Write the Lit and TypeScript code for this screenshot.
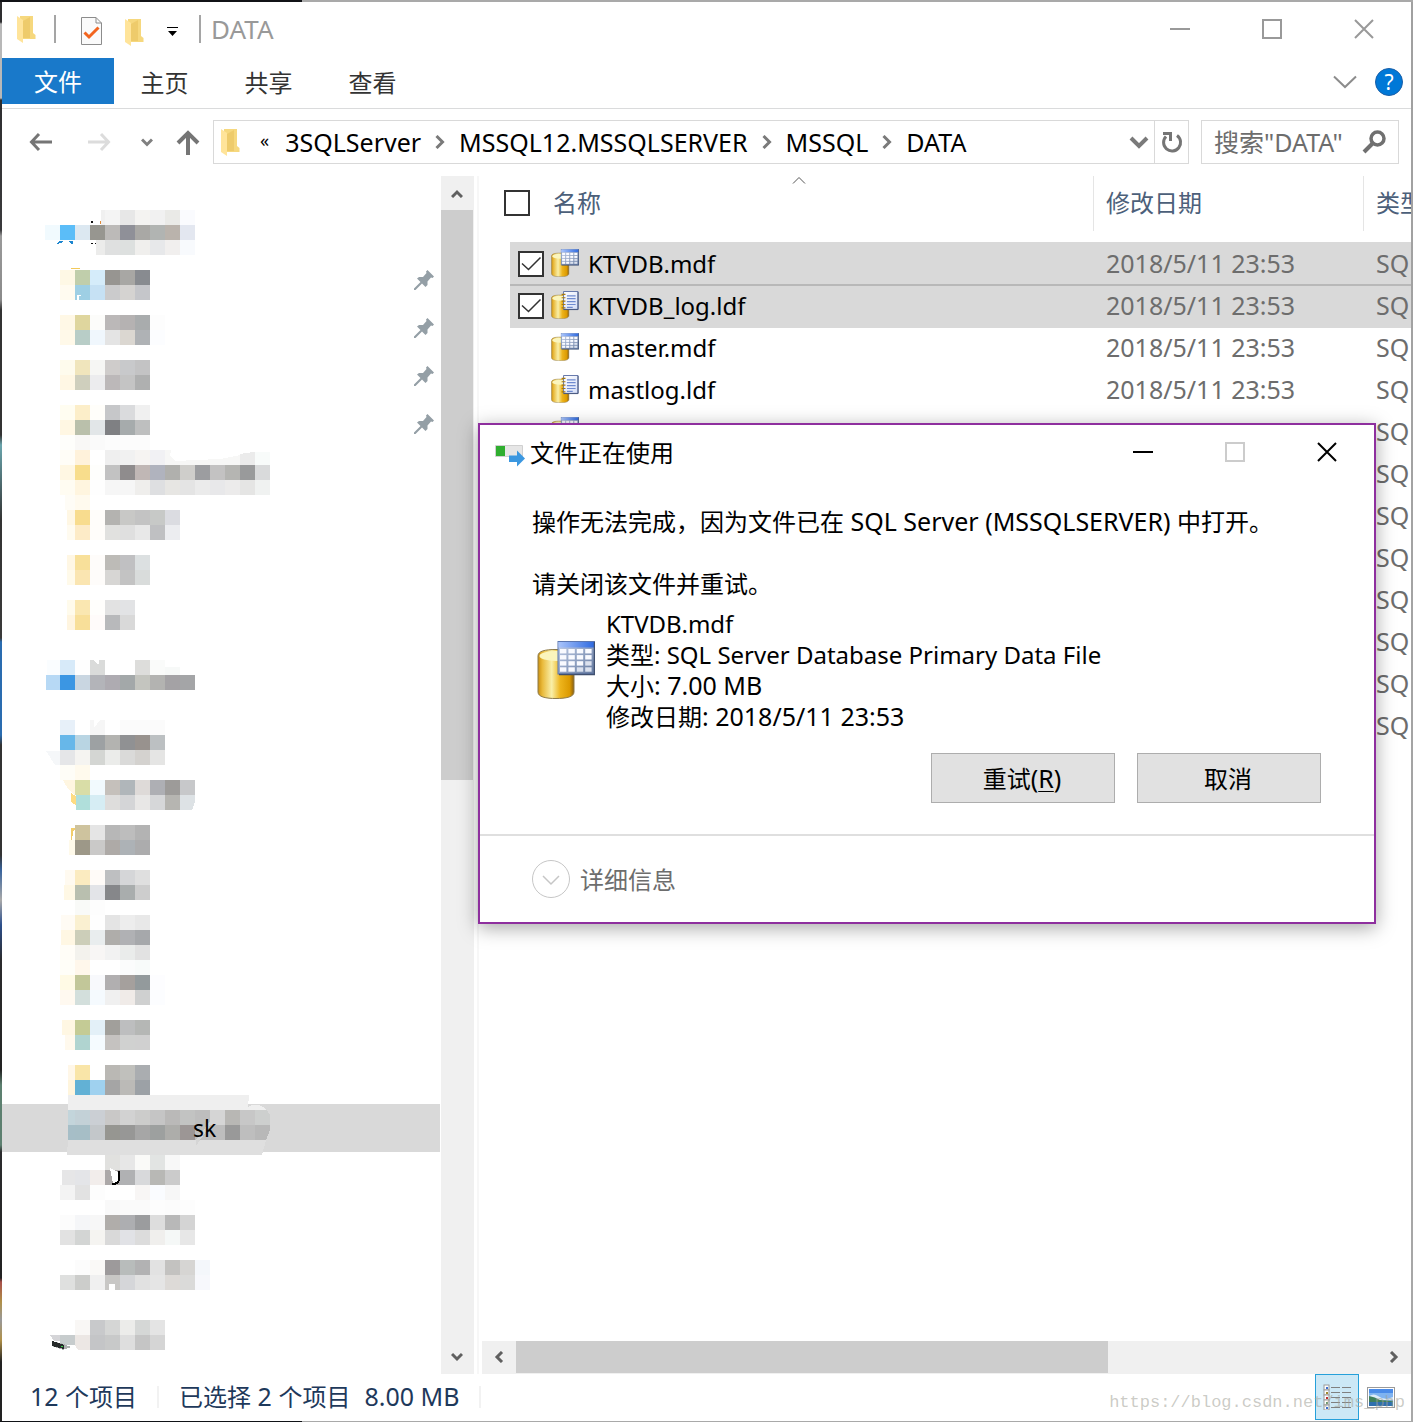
import { LitElement, html, svg, css, nothing } from "lit";
import { customElement, property, state } from "lit/decorators.js";

/* ---------- shared text helper: CJK and Latin runs use different sizes ---------- */
const mixed = (text: string) =>
  text
    .split(/([\u0020-\u007e]+)/)
    .filter((part) => part !== "")
    .map((part) => (/^[\u0020-\u007e]+$/.test(part) ? html`<span class="en">${part}</span>` : part));

const base = css`
  *,
  *::before,
  *::after {
    box-sizing: border-box;
  }
  .en {
    font-size: 25px;
  }
  button,
  input {
    font: inherit;
    color: inherit;
    background: none;
    border: 0;
    padding: 0;
    margin: 0;
    border-radius: 0;
  }
  svg {
    display: block;
    flex: none;
  }
`;

/* ---------- icons ---------- */
const folder = html`<svg width="19" height="27" viewBox="0 0 19 27">
  <path d="M3 0H16V17L18.500 19V23H3Z" fill="#f6d87e" />
  <path d="M6 5L13 1V22H6Z" fill="#ecc866" opacity=".8" />
  <path d="M0 0L6 4V27L0 23Z" fill="#ffe49a" />
</svg>`;

const minimize = html`<svg width="20" height="20" viewBox="0 0 20 20"><path d="M0 10H20" stroke="currentColor" stroke-width="2" /></svg>`;
const maximize = html`<svg width="20" height="20" viewBox="0 0 20 20"><path d="M1 1H19V19H1Z" fill="none" stroke="currentColor" stroke-width="2" /></svg>`;
const close = html`<svg width="20" height="20" viewBox="0 0 20 20"><path d="M1 1L19 19M19 1L1 19" stroke="currentColor" stroke-width="2" /></svg>`;

const crumbArrow = html`<svg width="10" height="14" viewBox="0 0 10 14"><path d="M1.500 1L7.500 7L1.500 13" fill="none" stroke="#7a7a7a" stroke-width="3" /></svg>`;

const pin = html`<svg width="20" height="20" viewBox="0 0 20 20">
  <path d="M13.500 0L20 6.500L18.500 8L17 7.500L13.500 11.500L13.500 15L11.500 17L8 13.500L1.500 20L0 20L0 18.500L6.500 12L3 8.500L5 7L9 7L12.500 3L12 1.500Z" fill="#949fa6" />
</svg>`;

const cylinder = svg`
  <defs>
    <linearGradient id="gold" x1="0" x2="1" y1="0" y2="0">
      <stop offset="0" stop-color="#c98f10" />
      <stop offset=".12" stop-color="#e9b93a" />
      <stop offset=".38" stop-color="#f9efa8" />
      <stop offset=".62" stop-color="#edb41c" />
      <stop offset=".88" stop-color="#dc9a00" />
      <stop offset="1" stop-color="#8a5f10" />
    </linearGradient>
    <linearGradient id="head" x1="0" x2="1" y1="0" y2="0">
      <stop offset="0" stop-color="#a9c4fb" />
      <stop offset="1" stop-color="#2f6ae0" />
    </linearGradient>
    <linearGradient id="grid" x1="0" x2="1" y1="0" y2="1">
      <stop offset="0" stop-color="#c3d0ea" />
      <stop offset="1" stop-color="#64799f" />
    </linearGradient>
    <linearGradient id="page" x1="0" x2="1" y1="0" y2="1">
      <stop offset="0" stop-color="#ffffff" />
      <stop offset="1" stop-color="#d5def7" />
    </linearGradient>
  </defs>
  <path d="M1 15C1 10 8 8.500 19 8.500S37 10 37 15V51C37 56 29 57.500 19 57.500S1 56 1 51Z" fill="url(#gold)" stroke="#8d7a4a" stroke-width="1" />
  <ellipse cx="19" cy="15" rx="16.500" ry="5" fill="#fbf5bd" />`;

const cellsOf = [0, 1, 2, 3];
const dataFileArt = svg`${cylinder}
  <rect x="21" y=".500" width="36.500" height="32.500" fill="url(#grid)" stroke="#5b76b0" />
  <rect x="21.500" y="1" width="35.500" height="5.500" fill="url(#head)" />
  ${cellsOf.map((r) => cellsOf.map((c) => svg`<rect x=${23 + c * 8.4} y=${8 + r * 6.1} width="6.400" height="4.400" fill=${c + r > 4 ? "#dbe1ee" : "#f9faff"} />`))}
  <path d="M57.500 1V33.500H22" fill="none" stroke="#40506f" stroke-width="1.500" />`;
const logFileArt = svg`${cylinder}
  <path d="M26 1H56V38H26Z" fill="url(#page)" stroke="#5f73a8" stroke-width="2" />
  <path d="M56 2V38.500H26" fill="none" stroke="#46567c" stroke-width="2" />
  <path d="M33 10H51M33 16H51M33 22H51M33 28H51M33 34H45" stroke="#6f8bd0" stroke-width="2.500" />
  <path d="M22 7H30M22 14H30M22 21H30M22 28H30M22 35H30" stroke="#a87a10" stroke-width="2.500" />`;

const fileIcon = (kind: string, size: number) => html`<svg width=${size} height=${size} viewBox="0 0 58 58">
  ${kind === "ldf" ? logFileArt : dataFileArt}
</svg>`;

/* ---------- folder tree ---------- */
/* A strip is [y, x of first cell, colours]; cells end on a 15px grid. */
type Strip = [number, number, string];
interface TreeRow {
  top: number;
  pinned?: boolean;
  selected?: boolean;
  strips: Strip[];
  extra?: unknown;
}

const TREE: TreeRow[][] = [
  [
    {
      top: 208,
      strips: [
        [210, 101, "f0f0f0 f4f4f4 e7e7e7 f4f3f1 f1f1f1 eaeae7 fafbfe"],
        [225, 45, "f1fafe 5bbdf8 dce8f1 979690 bcbab8 8f9098 a9a8a5 b1b4b2 bab3ac e3e7f0"],
        [240, 96, "ececeb dfe0e0 dde0df f0efed e7e8ea f1efee f8fafd"],
      ],
      extra: svg`<path d="M57 244L59 241H63L61 243ZM69 241H73V244H71Z" fill="#1d86cf" /><path d="M91 221H93V223H91ZM91 243H93V244H91ZM95 243H96V244H95Z" fill="#111" /><path d="M100 221H101V224H100Z" fill="#e08b3a" />`,
    },
    {
      top: 256,
      pinned: true,
      strips: [
        [270, 60, "fef8e5 c0ceab d5ecfa 979591 a8a7a4 888b90"],
        [285, 60, "fffbf0 9ecfe4 c6e1f4 cbcbcc d5d3d1 c5c6ca"],
      ],
      extra: svg`<path d="M71 268H80V269H71Z" fill="#f2c95a" /><path d="M77 295H81V296H79V300H77Z" fill="#fff" />`,
    },
    {
      top: 304,
      pinned: true,
      strips: [
        [315, 60, "fff8e6 dfd69e fcfcfa bbb8b8 b5b2b2 a9acad fdfdfd"],
        [330, 60, "fff9e9 b8cdc7 f0f7fd e4e4e4 dbd7d1 afb2b5 fcfdff"],
      ],
    },
    {
      top: 352,
      pinned: true,
      strips: [
        [360, 60, "fefbed f0e5bc f6f6f4 cfcccb c8c9cb c3c3c4"],
        [375, 60, "fff7e4 cfcfbd ececee bcb8b9 c4c4c4 afb0b0"],
      ],
    },
    {
      top: 400,
      pinned: true,
      strips: [
        [405, 60, "fffdf1 fceec9 fffefa c6c7c9 dadbdd f0f0f0"],
        [420, 60, "fff7e3 bac0ab e2e6e8 7f8083 a6abac bebfbf"],
        [435, 60, "fefefb f9f8f6 fafafa fcfcfc fcfcfc fcfcfc"],
      ],
    },
    {
      top: 448,
      strips: [
        [450, 60, "fffdf7 fff2db ffffff efefef f1f1f1 f6f4f2 f1f1f4"],
        [465, 60, "fff7e3 f8dd8c fefefc c2c2c2 8f8c8d c0b7b5 b0b3be b0b0ad cfcecb 9c9da0 c3c2c2 b5b5b2 999a9b d9dadb"],
        [480, 60, "fffcf2 fff5df fefefe f6f6f6 f6f6f6 efeeec dedfe1 e7e6e3 e4e4e4 ebebeb e8e8ea ecebeb e5e5e4 f0f2f1"],
        [495, 65, "fefcf6 fffaee"],
      ],
      extra: svg`<path d="M165 450H171L170 456L176 461L195 460L220 459L240 455V465H165Z" fill="#f7f7f6" /><path d="M240 454L253 452H255V465H240Z" fill="#ebebeb" /><path d="M255 452H270V465H255Z" fill="#f8fbfa" />`,
    },
    {
      top: 496,
      strips: [
        [510, 67, "fff7e4 f8dc8e fffdfa b4b3b0 c8c8c6 c3c3c3 c7c9c7 dbdce1"],
        [525, 67, "fffbf0 fdebc7 fffdfa e1e1df dfdfdf e8e8e8 bfc0c2 ecedf0"],
      ],
    },
    {
      top: 544,
      strips: [
        [555, 67, "fff7e4 f8e09a fefcfa bdbbb7 c0c0c2 dce0e1"],
        [570, 67, "fffaea fae5b1 fefcfa d7d6d4 c3c3c3 d9dcdb"],
      ],
    },
    {
      top: 592,
      strips: [
        [600, 67, "fffbec fae7b1 fffefc e2e2e2 e2e3e5"],
        [615, 67, "fff5e0 f8df99 fffbfa b8b9bb d9d9d9"],
      ],
    },
  ],
  [
    {
      top: 656,
      strips: [
        [660, 47, "fafdff d7eaf9 fefefe dadbda ffffff ffffff dddddb fafbfa"],
        [675, 46, "b7d9f5 3b96e3 c9d6e1 b3b4b9 aeabb1 a3a8a9 c4c5bf b3b3b1 a4a2a5 a4a5a7"],
      ],
      extra: svg`<path d="M94 660H99V664L97 664Z" fill="#fff" /><path d="M165 667H180V675H165Z" fill="#f7f9f8" />`,
    },
  ],
  [
    {
      top: 720,
      strips: [
        [720, 60, "e7f0f9 ffffff f6f6f6 ffffff fbfbfb fbfbfb fbfbfb"],
        [735, 60, "67b7e9 b9d5e3 9da1a3 b3b3b0 909193 98928e bcc0c2"],
        [750, 60, "e5e6e8 f5f4f1 d4d6d3 ebecea dadad9 d4d2cf e5e5e4"],
        [765, 60, "fefdf7 fffaed"],
      ],
      extra: svg`<path d="M46 751H60V765H55Z" fill="#f5f7f9" /><path d="M94 720H100L94 728Z" fill="#fff" />`,
    },
    {
      top: 768,
      strips: [
        [780, 75, "d9dda7 f2fafe c5c0bb b0b6ba dedad8 aeafb4 9d9b99 c7c8ca"],
        [795, 76, "b0dfdb d6edf4 dedddc d4d5d7 e8e7e6 d6d7d9 b6b5b1"],
      ],
      extra: svg`<path d="M63 780H75V795L68 789Z" fill="#fff6e1" /><path d="M71 793L76 796V805L71 802Z" fill="#fddc83" /><path d="M180 795H195V802L192 810H180Z" fill="#dde2e5" />`,
    },
    {
      top: 816,
      strips: [
        [825, 75, "cec39e e5e5e5 b7b7b7 bdbdbd b3b3b3"],
        [840, 69, "fffaea 9d9888 cac9c8 aeaaa7 adb2b6 acacad"],
      ],
      extra: svg`<path d="M71 828H75V829L73 832L72 840H71Z" fill="#f2cd6c" />`,
    },
    {
      top: 864,
      strips: [
        [870, 65, "fffaf0 fbebc0 fffbf8 bebfc1 d5d6d8 dfdfdf"],
        [885, 64, "fff8e5 b9bfaf e3e4e8 86878a a9adad cdcdcd"],
        [900, 75, "f9faf8 fdfdfd"],
      ],
    },
    {
      top: 912,
      strips: [
        [915, 61, "fffbf4 faf0d1 fefefe e4e4e4 ededed e8e8e8"],
        [930, 61, "fff7e3 ccceb9 e9edee afadaa b0b1b4 a6a8ab"],
        [945, 60, "fffdf7 f3f2ed f8f6f5 f2f2f2 eaeceb e2e2e2"],
        [960, 60, "fffef8 fff7eb ffffff ffffff fbfcfc f8fbfa"],
      ],
    },
    {
      top: 960,
      strips: [
        [975, 60, "fffae5 c2c799 f8f9fc b1afb0 a5a09d 939a9c fdfdff"],
        [990, 60, "fff9f0 d3dfdc f5fafe f0f0f0 f0ebe8 cfd0d0 fcfdff"],
      ],
    },
    {
      top: 1008,
      strips: [
        [1020, 62, "fff7e3 c4cb95 e3f0f8 a19f9b bdbebf b5b7b5"],
        [1035, 65, "fff9ed b0d4d0 f5fbff c5c2c0 d0d1d0 d0d0d0"],
      ],
    },
    {
      top: 1056,
      strips: [
        [1065, 68, "fff7e8 f9e5a8 ffffff bab8b4 c0c0bc aaadb0"],
        [1080, 68, "fff5dd 62b1d5 9fd1ef a5a5a5 bbbab7 9ca1a6"],
      ],
    },
    {
      top: 1104,
      selected: true,
      strips: [
        [1110, 68, "c3d5db c3d1d7 cbcfd4 c9c8c7 d2d2d2 cccccb c5c5c5 bab9b8 c2c3c2 bebebe d5d5d5 b8b7b4 c7c7c7"],
        [1125, 68, "a6bec7 a6bec6 c3c7ca 969691 979796 a6a6a6 9da09f adadaa 9c9695 bebebe bdbdbd 999999 bebebe"],
      ],
      extra: svg`<path d="M68 1095H249L248 1107Q258 1101 267 1110H68Z" fill="#efefef" /><path d="M255 1110H267L270 1115V1125H255Z" fill="#cdcfce" /><path d="M255 1125H270V1130L266 1140H255Z" fill="#b8b8b8" /><path d="M68 1140H266L262 1155H67Z" fill="#dfdfdf" /><path d="M196 1140L196 1146L214 1120V1116Z" fill="#d5d5d5" /><text x="193" y="1137" class="frag">sk</text>`,
    },
    {
      top: 1152,
      strips: [
        [1155, 105, "e1e1df e7e7e7 fafaf8 e2e4e3 f8f8f8"],
        [1170, 62, "e6e6e7 e4e5e8 f2edeb aca8a8 b0b1b3 d8d9db b8b8b5 cbcbcb"],
        [1185, 60, "f3f3f3 e2e2e2 fdfdfd ffffff ffffff f8f6f5 fafcff f7f7f7"],
      ],
      extra: svg`<path d="M110 1168L118 1172V1182L113 1184Z" fill="#fff" /><path d="M119 1171V1180Q118 1184 112 1184" fill="none" stroke="#000" stroke-width="2" />`,
    },
    {
      top: 1200,
      strips: [
        [1200, 105, "f9f9f9 fafafa fafafa fdfdfd fcfcfc fdfdfd"],
        [1215, 60, "fcfcfc f5f6f8 f7f7f7 b0adaa adaeb1 9b9c9e dddddd b8b8b8 d4d4d4"],
        [1230, 60, "e2e2e2 d3d5d4 f5f4f1 d9d9d9 e1e2e6 dcdcdc f0efed f5f8f7 e7e7e7"],
      ],
    },
    {
      top: 1248,
      strips: [
        [1260, 60, "ffffff fcfcfc faf9f7 9d9a9b b8bcbb b2b2b3 e2e2e2 c3c2c0 d6d5d3 f4f7fb"],
        [1275, 60, "dfe0df cccdcb f0f0f0 c8c7c5 d5d6d9 e1e1e1 e5e5e5 dddad7 dadad9 f7f8fc"],
      ],
      extra: svg`<path d="M109 1284H115V1290H109Z" fill="#fff" />`,
    },
  ],
  [
    {
      top: 1312,
      strips: [
        [1320, 75, "f9f7f5 c8c9cb d5d6d5 ececea d5d7d6 e4e4e4"],
        [1335, 60, "c7cccd ece7e4 c4c5c7 c8c9c9 dedede c5c5c5 d5d5d5"],
      ],
      extra: svg`<path d="M50 1335H60V1341H54Z" fill="#d5d5d8" /><path d="M60 1345H78V1350H60Z" fill="#fff" /><path d="M75 1345H90V1350H78Z" fill="#ece7e4" /><path d="M52 1341L64 1344L71 1347L63 1350L52 1346Z" fill="#aeb0b0" /><path d="M52 1341L64 1345V1349L52 1346Z" fill="#262a2a" /><path d="M61 1346H63V1347H61Z" fill="#3ad04a" />`,
    },
  ],
];

@customElement("folder-tree")
class FolderTree extends LitElement {
  static styles = [
    base,
    css`
      :host {
        display: block;
        padding-top: 32px;
      }
      .group {
        list-style: none;
        margin: 0 0 16px;
        padding: 0;
      }
      .group:last-child {
        margin-bottom: 0;
      }
      .row {
        display: flex;
        align-items: center;
        justify-content: space-between;
        width: 100%;
        height: 48px;
        padding-right: 6px;
      }
      .row.selected {
        background: #d9d9d9;
      }
      .mosaic {
        overflow: visible;
      }
      .frag {
        font: 23px "Noto Sans", sans-serif;
        fill: #000;
      }
    `,
  ];

  private cells([y, start, colours]: Strip) {
    let x = start;
    return colours.split(" ").map((c) => {
      const next = (Math.floor(x / 15) + 1) * 15;
      const cell = svg`<rect x=${x} y=${y} width=${next - x} height="15" fill=${"#" + c} />`;
      x = next;
      return cell;
    });
  }

  render() {
    return TREE.map(
      (group) => html`<ul class="group">
        ${group.map(
          (row) => html`<li>
            <button class="row ${row.selected ? "selected" : ""}">
              <svg class="mosaic" width="300" height="48" viewBox="2 ${row.top} 300 48" shape-rendering="crispEdges">
                ${row.strips.map((s) => this.cells(s))} ${row.extra ?? nothing}
              </svg>
              ${row.pinned ? pin : nothing}
            </button>
          </li>`
        )}
      </ul>`
    );
  }
}

/* ---------- scrollbar ---------- */
@customElement("scroll-bar")
class ScrollBar extends LitElement {
  @property({ reflect: true }) direction = "vertical";
  @property({ type: Number }) size = 50;

  static styles = [
    base,
    css`
      :host {
        display: flex;
        background: #f0f0f0;
      }
      :host([direction="vertical"]) {
        flex-direction: column;
        width: 33px;
        padding-right: 1px;
      }
      :host([direction="horizontal"]) {
        height: 33px;
        padding-bottom: 1px;
      }
      .step {
        display: flex;
        align-items: center;
        justify-content: center;
        flex: none;
        width: 34px;
        height: 34px;
      }
      :host([direction="vertical"]) .step {
        width: 32px;
      }
      :host([direction="horizontal"]) .step {
        height: 32px;
      }
      .track {
        display: flex;
        flex: 1;
      }
      :host([direction="vertical"]) .track {
        flex-direction: column;
      }
      .thumb {
        background: #cdcdcd;
      }
      .arrow {
        fill: none;
        stroke: #606060;
        stroke-width: 3;
      }
    `,
  ];

  render() {
    const v = this.direction === "vertical";
    return html`
      <button class="step" aria-label="-">
        ${v
          ? html`<svg width="12" height="10" viewBox="0 0 12 10"><path class="arrow" d="M1 9L6 4L11 9" /></svg>`
          : html`<svg width="10" height="12" viewBox="0 0 10 12"><path class="arrow" d="M8 1L3 6L8 11" /></svg>`}
      </button>
      <div class="track"><div class="thumb" style="flex:0 0 ${this.size}%"></div></div>
      <button class="step" aria-label="+">
        ${v
          ? html`<svg width="12" height="10" viewBox="0 0 12 10"><path class="arrow" d="M1 2L6 7L11 2" /></svg>`
          : html`<svg width="10" height="12" viewBox="0 0 10 12"><path class="arrow" d="M2 1L7 6L2 11" /></svg>`}
      </button>
    `;
  }
}

/* ---------- file list ---------- */
interface FileRow {
  name?: string;
  date?: string;
  checked?: boolean;
}
const stamp = "2018/5/11 23:53";
const FILES: FileRow[] = [
  { name: "KTVDB.mdf", date: stamp, checked: true },
  { name: "KTVDB_log.ldf", date: stamp, checked: true },
  { name: "master.mdf", date: stamp },
  { name: "mastlog.ldf", date: stamp },
  { name: "model.mdf", date: stamp },
  {},
  {},
  {},
  {},
  {},
  {},
  {},
];

@customElement("file-list")
class FileList extends LitElement {
  static styles = [
    base,
    css`
      :host {
        display: block;
        overflow: hidden;
      }
      .files {
        width: 100%;
        table-layout: fixed;
        border-collapse: separate;
        border-spacing: 0;
      }
      .date {
        width: 270px;
      }
      .type {
        width: 48px;
      }
      th {
        padding: 0 0 11px;
        font-weight: 400;
        text-align: left;
        color: #4c607a;
      }
      .head {
        position: relative;
        display: flex;
        align-items: center;
        height: 55px;
        padding: 0 0 2px 12px;
        overflow: hidden;
        white-space: nowrap;
        border-left: 1px solid #e5e5e5;
      }
      .head.first {
        border-left: 0;
        gap: 23px;
        padding-left: 24px;
      }
      .sort {
        position: absolute;
        top: 0;
        left: 50%;
        margin-left: 5px;
      }
      td {
        height: 42px;
        padding: 0 0 0 13px;
        color: #6d6d6d;
        white-space: nowrap;
        overflow: hidden;
      }
      td.name {
        color: #000;
        border-left: 30px solid transparent;
        background-clip: padding-box;
        padding-left: 8px;
      }
      .cell {
        display: flex;
        align-items: center;
        gap: 7px;
      }
      .cell .box {
        margin-top: 2px;
      }
      .file {
        margin-left: 2px;
      }
      .checked td {
        background-color: #d9d9d9;
      }
      .checked + .checked td {
        background-image: linear-gradient(#b8b8b8 2px, transparent 2px);
      }
      .checked + tr:not(.checked) td {
        background-image: linear-gradient(#d9d9d9 2px, transparent 2px);
      }
      .box {
        display: grid;
        width: 26px;
        height: 26px;
        flex: none;
      }
      .box > * {
        grid-area: 1 / 1;
      }
      .tick {
        appearance: none;
        width: 26px;
        height: 26px;
        border: 2px solid #333;
        background: #fff;
      }
      .box svg {
        pointer-events: none;
        z-index: 1;
      }
    `,
  ];

  private box(checked: boolean, label: string) {
    return html`<label class="box">
      <input class="tick" type="checkbox" aria-label=${label} .checked=${checked} />
      ${checked
        ? html`<svg width="26" height="26" viewBox="0 0 26 26"><path d="M4 12.500L10.500 18.500L22.500 6.500" fill="none" stroke="#333" stroke-width="1.500" /></svg>`
        : nothing}
    </label>`;
  }

  render() {
    return html`<table class="files">
      <colgroup>
        <col />
        <col class="date" />
        <col class="type" />
      </colgroup>
      <thead>
        <tr>
          <th>
            <div class="head first">
              ${this.box(false, "名称")}名称
              <svg class="sort" width="14" height="8" viewBox="0 0 14 8"><path d="M1 7.500L7 1.500L13 7.500" fill="none" stroke="#555" /></svg>
            </div>
          </th>
          <th><div class="head">修改日期</div></th>
          <th><div class="head">类型</div></th>
        </tr>
      </thead>
      <tbody>
        ${FILES.map(
          (f) => html`<tr class=${f.checked ? "checked" : ""}>
            <td class="name">
              ${f.name
                ? html`<div class="cell">
                    ${f.checked ? this.box(true, f.name) : html`<span class="box"></span>`}
                    <span>${fileIcon(f.name.slice(-3), 28)}</span>
                    <span class="file">${f.name}</span>
                  </div>`
                : nothing}
            </td>
            <td>${f.date ? html`<span class="en">${f.date}</span>` : nothing}</td>
            <td><span class="en">SQ</span></td>
          </tr>`
        )}
      </tbody>
    </table>`;
  }
}

/* ---------- dialog ---------- */
@customElement("file-in-use-dialog")
class FileInUseDialog extends LitElement {
  static styles = [
    base,
    css`
      :host {
        display: block;
        background: #fff;
        border: 2px solid #8e2f9e;
        box-shadow: 0 4px 18px rgba(0, 0, 0, 0.35);
        color: #000;
      }
      .bar {
        display: flex;
        align-items: center;
        height: 56px;
        padding: 0 1px 2px 15px;
        gap: 5px;
      }
      .progress {
        margin-top: 8px;
      }
      .title {
        flex: 1;
        margin: 0;
        font-size: 24px;
        font-weight: inherit;
      }
      .controls {
        display: flex;
      }
      .control {
        display: flex;
        align-items: center;
        justify-content: center;
        width: 92px;
        height: 54px;
      }
      .control.off {
        color: #ccc;
      }
      .body {
        padding: 25px 53px 31px 52px;
      }
      .message {
        margin: 0 0 31px;
      }
      .message,
      .detail {
        line-height: 31px;
      }
      .hint {
        margin: 0 0 9px;
        line-height: 31px;
      }
      .file {
        display: flex;
        align-items: center;
        gap: 11px;
        padding-left: 5px;
      }
      .detail {
        margin: 0;
      }
      .actions {
        display: flex;
        justify-content: flex-end;
        gap: 22px;
        margin-top: 21px;
      }
      .action {
        width: 184px;
        height: 50px;
        padding-right: 2px;
        background: #e1e1e1;
        border: 1px solid #adadad;
      }
      .foot {
        display: flex;
        align-items: center;
        height: 88px;
        padding-left: 52px;
        border-top: 2px solid #dfdfdf;
      }
      .more {
        display: flex;
        align-items: center;
        gap: 10px;
        color: #6d6d6d;
      }
      u {
        text-decoration-thickness: 1px;
        text-underline-offset: 3px;
      }
    `,
  ];

  render() {
    return html`
      <header class="bar">
        <svg class="progress" width="30" height="22" viewBox="0 0 30 22">
          <path d="M.5 .5H27.500V11.500H.5Z" fill="#e6e6e6" stroke="#d0d0d0" />
          <path d="M1 1H10V11H1Z" fill="#2fae2f" />
          <path d="M14 10.500H22V5.500L30 13.500L22 21.500V17H14Z" fill="#3b97e0" />
        </svg>
        <h2 class="title">文件正在使用</h2>
        <div class="controls">
          <button class="control" aria-label="最小化">${minimize}</button>
          <button class="control off" aria-label="最大化" disabled>${maximize}</button>
          <button class="control" aria-label="关闭">${close}</button>
        </div>
      </header>
      <section class="body">
        <p class="message">${mixed("操作无法完成，因为文件已在 SQL Server (MSSQLSERVER) 中打开。")}</p>
        <p class="hint">请关闭该文件并重试。</p>
        <div class="file">
          ${fileIcon("mdf", 58)}
          <div>
            <p class="detail">KTVDB.mdf</p>
            <p class="detail">类型: SQL Server Database Primary Data File</p>
            <p class="detail">${mixed("大小: 7.00 MB")}</p>
            <p class="detail">${mixed("修改日期: 2018/5/11 23:53")}</p>
          </div>
        </div>
        <div class="actions">
          <button class="action">重试<span class="en">(<u>R</u>)</span></button>
          <button class="action">取消</button>
        </div>
      </section>
      <footer class="foot">
        <button class="more">
          <svg width="38" height="38" viewBox="0 0 38 38">
            <circle cx="19" cy="19" r="18.500" fill="none" stroke="#c6c6c6" />
            <path d="M11 16L19 24L27 16" fill="none" stroke="#c6c6c6" stroke-width="1.500" />
          </svg>
          详细信息
        </button>
      </footer>
    `;
  }
}

/* ---------- window ---------- */
@customElement("app-root")
class AppRoot extends LitElement {
  @state() private path = ["3SQLServer", "MSSQL12.MSSQLSERVER", "MSSQL", "DATA"];

  static styles = [
    base,
    css`
      :host {
        display: block;
        font-family: "Noto Sans", "Noto Sans CJK SC", sans-serif;
        font-size: 24px;
        line-height: 31px;
        color: #000;
      }
      .desktop {
        position: relative;
        display: flex;
        flex-direction: column;
        min-height: 100vh;
        padding: 1px 2px 1px 2px;
        background:
          linear-gradient(90deg, #111317 302px, #a9a9a9 302px) top / 100% 2px no-repeat,
          linear-gradient(90deg, #111317 302px, #a9a9a9 302px) bottom / 100% 1px no-repeat,
          linear-gradient(#a0a0a0, #a8a8a8) right / 2px 100% no-repeat,
          linear-gradient(#2e2e30 22px, #b8b8b8 24px, #b8b8b8 98px, #2e2e30 100px, #3a3a3c 230px, #9a9a9a 236px, #8a8a8a 300px, #333 310px, #333 435px, #6aa5ad 445px, #333 520px, #3a3a3a 638px, #2a6cb0 642px, #2a6cb0 735px, #333 745px, #333 855px, #38639c 870px, #aaa 900px, #2c4f8c 925px, #2b2b2d 960px, #222 1070px, #5d8070 1085px, #5d8070 1145px, #2b2b2d 1152px, #222 1278px, #a8504a 1282px, #b09048 1302px, #999 1320px, #b09048 1340px, #222 1362px, #222 1422px);
      }
      .window {
        display: flex;
        flex-direction: column;
        flex: 1;
        margin-top: 1px;
        background: #fff;
      }
      .title-bar {
        display: flex;
        align-items: center;
        height: 56px;
        padding: 0 1px 2px 15px;
        color: #999;
      }
      .rule {
        width: 2px;
        height: 28px;
        background: #a5a5a5;
      }
      .quick {
        display: flex;
        align-items: center;
        flex: 1;
      }
      .props {
        margin: 4px 23px 0 25px;
      }
      .app {
        margin-right: 18px;
      }
      .new {
        margin-top: 6px;
      }
      .drop {
        margin: 4px 21px 0 23px;
      }
      .caption {
        margin: 0;
        padding-left: 10px;
        font-weight: inherit;
        font-size: 26px;
      }
      .control {
        display: flex;
        align-items: center;
        justify-content: center;
        width: 92px;
        height: 54px;
      }
      .ribbon {
        display: flex;
        align-items: flex-start;
        height: 51px;
        border-bottom: 1px solid #dadbdc;
        color: #333;
      }
      .tab {
        width: 104px;
        height: 46px;
        padding: 3px 3px 0 0;
      }
      .tab.file {
        width: 112px;
        padding: 0;
        background: #1979ca;
        color: #fff;
      }
      .ribbon-end {
        display: flex;
        align-items: center;
        gap: 18px;
        height: 48px;
        margin-left: auto;
        padding-right: 8px;
      }
      .help {
        display: flex;
        align-items: center;
        justify-content: center;
        width: 28px;
        height: 28px;
        border-radius: 50%;
        background: #0078d7;
        border: 1px solid #1a5fa8;
        color: #fff;
        font-size: 21px;
      }
      .nav {
        display: flex;
        align-items: center;
        height: 67px;
        padding: 0 12px 1px 26px;
      }
      .back {
        margin-right: 36px;
      }
      .forward {
        margin-right: 29px;
      }
      .recent {
        margin-right: 23px;
      }
      .up {
        margin-right: 13px;
      }
      .address {
        display: flex;
        align-items: center;
        flex: 1;
        height: 44px;
        border: 1px solid #d9d9d9;
        padding-left: 7px;
      }
      .crumbs {
        display: flex;
        align-items: center;
        gap: 14px;
        flex: 1;
        font-size: 25px;
      }
      .more {
        font-size: 18px;
        margin: 0 2px 4px 6px;
      }
      .expand {
        margin-right: 5px;
      }
      .refresh {
        display: flex;
        align-items: center;
        justify-content: center;
        width: 34px;
        height: 42px;
        border-left: 1px solid #d9d9d9;
      }
      .search {
        display: flex;
        align-items: center;
        width: 198px;
        height: 44px;
        margin-left: 12px;
        padding: 0 12px 0 12px;
        border: 1px solid #d9d9d9;
      }
      .query {
        flex: 1;
        min-width: 0;
        font-size: 25px;
        outline: 0;
      }
      .query::placeholder {
        color: #6d6d6d;
        opacity: 1;
      }
      .content {
        display: flex;
        flex: 1;
      }
      .tree {
        width: 438px;
        margin-right: 1px;
        flex: none;
      }
      .splitter {
        width: 2px;
        margin: 0 1px 0 3px;
        background: #f7f7f7;
      }
      .main {
        display: flex;
        flex-direction: column;
        justify-content: space-between;
        flex: 1;
        min-width: 0;
      }
      .main scroll-bar {
        margin-left: 2px;
      }
      .status {
        display: flex;
        align-items: center;
        height: 47px;
        padding: 0 16px 1px 28px;
        color: #1e395b;
      }
      .count {
        margin-bottom: 2px;
      }
      .mark {
        width: 2px;
        height: 22px;
        margin: 0 20px;
        background: #f2f2f2;
      }
      .amount {
        margin-left: 14px;
      }
      .views {
        display: flex;
        align-items: center;
        gap: 8px;
        margin-left: auto;
      }
      .view {
        display: flex;
        align-items: center;
        justify-content: center;
      }
      .view.on {
        width: 44px;
        height: 46px;
        background: #cce8f6;
        border: 1px solid #26a0da;
      }
      .dialog {
        position: absolute;
        top: 423px;
        left: 478px;
        right: 37px;
      }
      .watermark {
        position: absolute;
        right: 8px;
        bottom: 4px;
        font: 17px/31px "Liberation Mono", monospace;
        color: rgba(160, 160, 150, 0.55);
      }
    `,
  ];

  render() {
    const colors = ["#3f6fd0", "#a08a30", "#c03030", "#6a9a60", "#3f6fd0"];
    return html`
      <div class="desktop">
        <div class="window">
          <header class="title-bar">
            <div class="quick">
              <span class="app">${folder}</span>
              <span class="rule"></span>
              <button class="props" aria-label="属性">
                <svg width="21" height="28" viewBox="0 0 21 28">
                  <path d="M.5 .5H15L20.500 6V27.500H.5Z" fill="#fafafa" stroke="#8c8c8c" />
                  <path d="M15 .5V6H20.500" fill="none" stroke="#8c8c8c" />
                  <path d="M3.500 15.500L8 20L17.500 10.500" fill="none" stroke="#f2641e" stroke-width="3" />
                </svg>
              </button>
              <button class="new" aria-label="新建文件夹">${folder}</button>
              <button class="drop" aria-label="自定义">
                <svg width="11" height="9" viewBox="0 0 11 9"><path d="M0 0H11V1H0ZM1 4H10L5.500 9Z" fill="#000" /></svg>
              </button>
              <span class="rule"></span>
              <h1 class="caption">DATA</h1>
            </div>
            <button class="control" aria-label="最小化">${minimize}</button>
            <button class="control" aria-label="最大化">${maximize}</button>
            <button class="control" aria-label="关闭">${close}</button>
          </header>

          <nav class="ribbon">
            <button class="tab file">文件</button>
            <button class="tab">主页</button>
            <button class="tab">共享</button>
            <button class="tab">查看</button>
            <div class="ribbon-end">
              <button aria-label="展开">
                <svg width="24" height="14" viewBox="0 0 24 14"><path d="M1 1.500L12 12L23 1.500" fill="none" stroke="#8c8c8c" stroke-width="2" /></svg>
              </button>
              <button class="help">?</button>
            </div>
          </nav>

          <div class="nav">
            <button class="back" aria-label="后退">
              <svg width="24" height="20" viewBox="0 0 24 20"><path d="M11 2L3.500 10L11 18M4 10H24" fill="none" stroke="#757575" stroke-width="3" /></svg>
            </button>
            <button class="forward" aria-label="前进">
              <svg width="24" height="20" viewBox="0 0 24 20"><path d="M13 2L20.500 10L13 18M0 10H20" fill="none" stroke="#dcdcdc" stroke-width="3" /></svg>
            </button>
            <button class="recent" aria-label="历史">
              <svg width="12" height="9" viewBox="0 0 12 9"><path d="M1 1.500L6 6.500L11 1.500" fill="none" stroke="#808080" stroke-width="3" /></svg>
            </button>
            <button class="up" aria-label="上移">
              <svg width="24" height="25" viewBox="0 0 24 25"><path d="M2 13L12 3L22 13M12 4V25" fill="none" stroke="#757575" stroke-width="4" /></svg>
            </button>
            <div class="address">
              <div class="crumbs">
                ${folder}
                <button class="more">«</button>
                ${this.path.map((p, i) => html`${i ? crumbArrow : nothing}<button>${p}</button>`)}
              </div>
              <button class="expand" aria-label="展开">
                <svg width="20" height="14" viewBox="0 0 20 14"><path d="M2 3L10 11L18 3" fill="none" stroke="#7a7a7a" stroke-width="4" /></svg>
              </button>
              <button class="refresh" aria-label="刷新">
                <svg width="22" height="24" viewBox="0 0 22 24">
                  <path d="M16 5.500A8.500 8.500 0 1 1 5 6.500" fill="none" stroke="#757575" stroke-width="3" />
                  <path d="M2 3.500H9.500V11" fill="none" stroke="#757575" stroke-width="3" />
                </svg>
              </button>
            </div>
            <div class="search">
              <input class="query" type="text" aria-label="搜索" placeholder='搜索"DATA"' />
              <svg width="24" height="24" viewBox="0 0 24 24">
                <circle cx="15.500" cy="8.500" r="6.500" fill="none" stroke="#707070" stroke-width="3.500" />
                <path d="M11 13L2 22" stroke="#707070" stroke-width="4" />
              </svg>
            </div>
          </div>

          <div class="content">
            <folder-tree class="tree"></folder-tree>
            <scroll-bar direction="vertical" size="50.4"></scroll-bar>
            <div class="splitter"></div>
            <div class="main">
              <file-list></file-list>
              <scroll-bar direction="horizontal" size="68.8"></scroll-bar>
            </div>
          </div>

          <footer class="status">
            <span class="count">${mixed("12 个项目")}</span>
            <span class="mark"></span>
            <span class="count">${mixed("已选择 2 个项目")}</span>
            <span class="count amount">${mixed("8.00 MB")}</span>
            <span class="mark"></span>
            <div class="views">
              <button class="view on" aria-label="详细信息">
                <svg width="28" height="26" viewBox="0 0 28 26">
                  ${colors.map(
                    (c, i) => svg`<rect x="1" y=${1 + i * 5} width="5" height="5" fill="#fff" stroke="#9a9a9a" />
                    <rect x="3" y=${3 + i * 5} width="2" height="2" fill=${c} />
                    <path d="M8 ${3 + i * 5}.5H17M19 ${3 + i * 5}.5H28" stroke="#808080" />`
                  )}
                </svg>
              </button>
              <button class="view" aria-label="大图标">
                <svg width="28" height="21" viewBox="0 0 28 21">
                  <rect x=".5" y=".5" width="27" height="20" fill="#fff" stroke="#9a9a9a" />
                  <path d="M2 2H26V19H2Z" fill="#7fb3f0" />
                  <path d="M2 2H26V6H2Z" fill="#4a8be8" />
                  <path d="M2 9Q7 6 11 9T20 12L26 10V13H2Z" fill="#dcebf8" />
                  <path d="M2 9Q8 10 13 13L26 14V15H2Z" fill="#3f7f5a" />
                  <path d="M2 15H26V19H2Z" fill="#2f6fae" />
                </svg>
              </button>
            </div>
          </footer>
        </div>
        <file-in-use-dialog class="dialog" role="dialog"></file-in-use-dialog>
        <span class="watermark">https://blog.csdn.net/ims_php</span>
      </div>
    `;
  }
}
